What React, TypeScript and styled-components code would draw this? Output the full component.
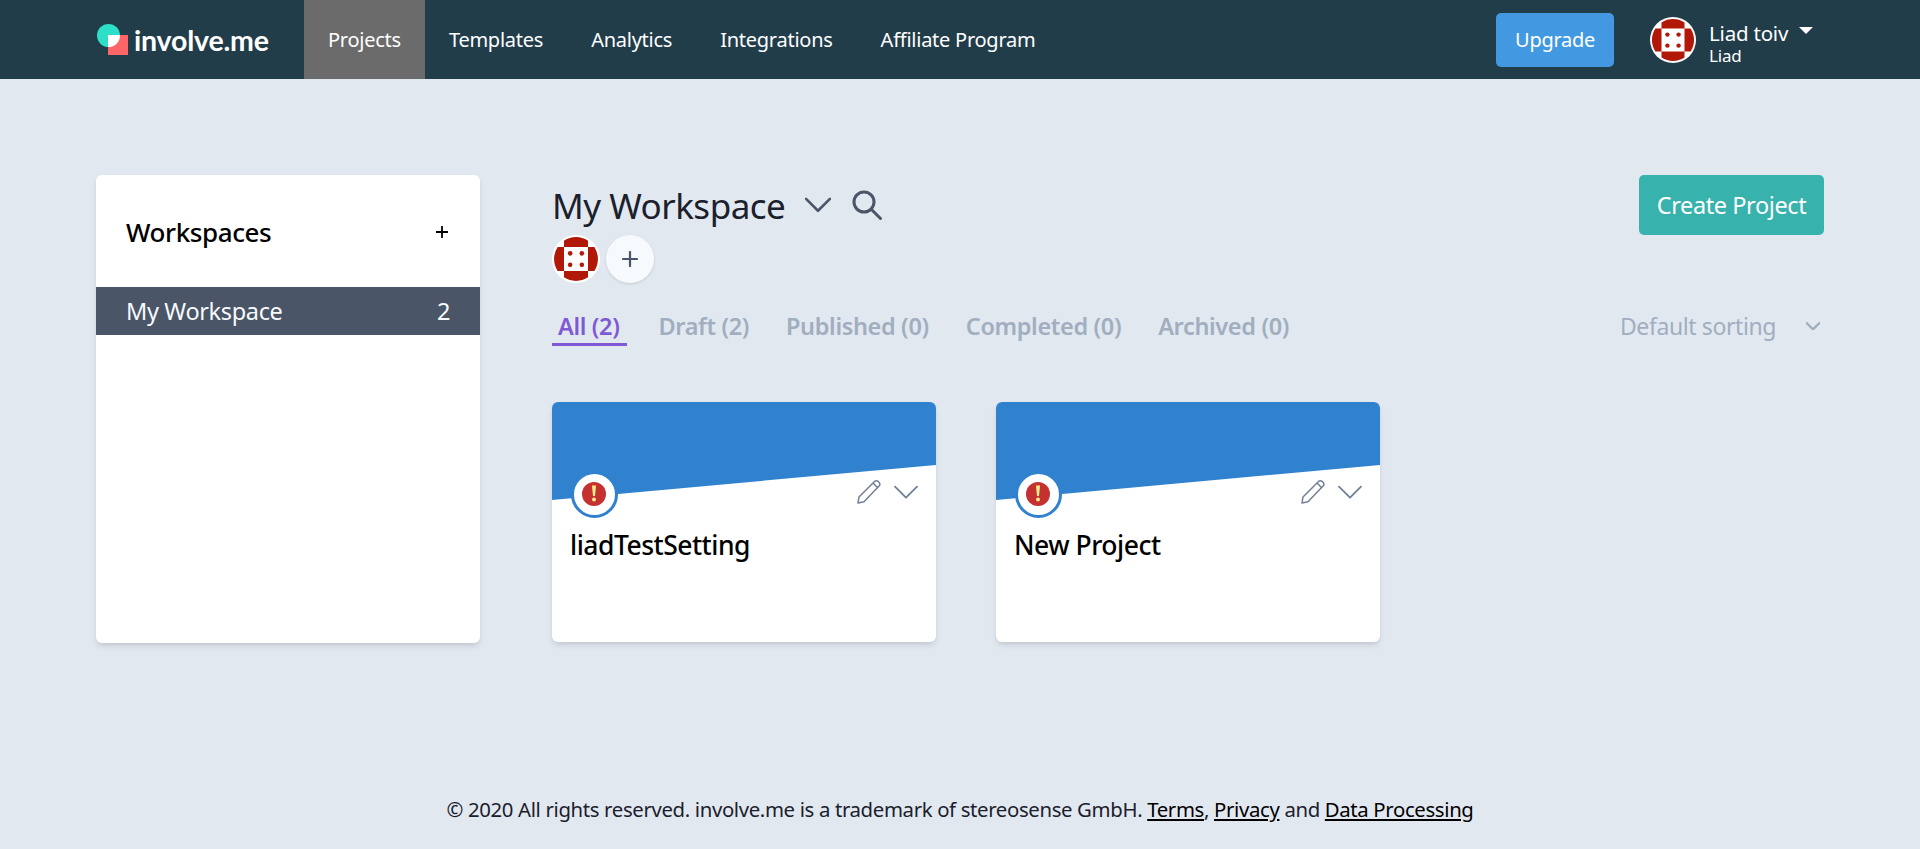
import React from 'react';
import styled, { createGlobalStyle } from 'styled-components';

const GlobalStyle = createGlobalStyle`
  html, body {
    margin: 0;
    padding: 0;
    background: #e2e8f0;
    font-family: 'Noto Sans', 'Open Sans', Arial, sans-serif;
  }
  * { box-sizing: border-box; }
`;

const Page = styled.div`
  display: flex;
  flex-direction: column;
  height: 849px;
  overflow: hidden;
`;

const Header = styled.header`
  display: flex;
  align-items: stretch;
  height: 79px;
  padding: 0 52px 0 96px;
  background: #223d4a;
  color: #fff;
`;

const LogoLink = styled.a`
  display: flex;
  align-items: center;
  width: 208px;
  gap: 5px;
`;

const LogoText = styled.span`
  font-family: Lato, sans-serif;
  font-weight: 700;
  font-size: 28.5px;
  letter-spacing: -0.2px;
  color: #fff;
`;

const NavItem = styled.a<{ $active?: boolean }>`
  display: flex;
  align-items: center;
  padding: 0 24px;
  font-size: 20px;
  letter-spacing: -0.25px;
  color: #fff;
  background: ${(p) => (p.$active ? '#6b6b6b' : 'transparent')};
`;

const HeaderRight = styled.div`
  display: flex;
  align-items: center;
  margin-left: auto;
`;

const UpgradeButton = styled.button`
  width: 118px;
  height: 54px;
  margin-right: 36px;
  border: 0;
  border-radius: 5px;
  background: #4299e1;
  color: #fff;
  font: inherit;
  font-size: 20px;
  letter-spacing: -0.3px;
`;

const UserBlock = styled.div`
  display: flex;
  flex-direction: column;
  margin: 7px 0 0 13px;
  width: 159px;
`;

const UserName = styled.div`
  display: flex;
  align-items: center;
  font-size: 20.5px;
  line-height: 26px;
  letter-spacing: -0.2px;
`;

const Caret = styled.span`
  width: 0;
  height: 0;
  margin: -6px 0 0 11px;
  border-left: 7px solid transparent;
  border-right: 7px solid transparent;
  border-top: 7px solid #fff;
`;

const UserSub = styled.div`
  font-size: 17px;
  line-height: 20px;
  letter-spacing: -0.2px;
`;

const Content = styled.main`
  flex: 1;
  display: flex;
  align-items: flex-start;
  gap: 72px;
  padding: 96px 96px 0;
`;

const Sidebar = styled.aside`
  flex: none;
  width: 384px;
  height: 468px;
  padding-top: 32px;
  background: #fff;
  border-radius: 6px;
  box-shadow: 0 4px 6px -1px rgba(0, 0, 0, 0.1), 0 2px 4px -1px rgba(0, 0, 0, 0.06);
`;

const SidebarHead = styled.div`
  display: flex;
  align-items: center;
  justify-content: space-between;
  height: 50px;
  padding: 0 31px 0 30px;
  margin-bottom: 30px;
`;

const SidebarTitle = styled.h2`
  margin: 0;
  font-size: 26px;
  font-weight: 500;
  letter-spacing: -0.4px;
  color: #000;
`;

const SidebarRow = styled.div`
  display: flex;
  align-items: center;
  justify-content: space-between;
  height: 48px;
  padding: 0 30px;
  background: #4a5568;
  color: #f7fafc;
  font-size: 23.5px;
  letter-spacing: -0.35px;
`;

const Main = styled.section`
  flex: 1;
  min-width: 0;
`;

const TopRow = styled.div`
  display: flex;
  justify-content: space-between;
  height: 60px;
`;

const TitleGroup = styled.div`
  display: flex;
  align-items: center;
  gap: 20px;
  height: 60px;
`;

const Title = styled.h1`
  margin: 0;
  font-size: 35px;
  font-weight: 400;
  letter-spacing: -0.5px;
  color: #1a202c;
`;

const CreateButton = styled.button`
  width: 185px;
  height: 60px;
  border: 0;
  border-radius: 5px;
  background: #38b2ac;
  color: #fff;
  font: inherit;
  font-size: 23.5px;
  letter-spacing: -0.4px;
`;

const Members = styled.div`
  display: flex;
  gap: 6px;
  height: 48px;
`;

const AddMember = styled.button`
  display: flex;
  align-items: center;
  justify-content: center;
  width: 48px;
  height: 48px;
  padding: 0;
  border: 0;
  border-radius: 50%;
  background: #f7fafc;
  box-shadow: 0 1px 3px rgba(0, 0, 0, 0.12);
`;

const TabsRow = styled.div`
  display: flex;
  align-items: flex-start;
  justify-content: space-between;
  margin-top: 25px;
`;

const Tabs = styled.nav`
  display: flex;
  gap: 25px;
`;

const Tab = styled.a<{ $active?: boolean }>`
  display: block;
  padding: 0 ${(p) => (p.$active ? '8px' : '6px')} 0 6px;
  height: 38px;
  line-height: 36px;
  font-size: 23.5px;
  font-weight: 600;
  letter-spacing: -0.35px;
  color: ${(p) => (p.$active ? '#805ad5' : '#a0aec0')};
  border-bottom: 3px solid ${(p) => (p.$active ? '#805ad5' : 'transparent')};
`;

const Sorting = styled.div`
  display: flex;
  align-items: center;
  height: 36px;
  gap: 30px;
  padding-right: 4px;
  font-size: 23px;
  letter-spacing: -0.4px;
  color: #a0aec0;
`;

const Cards = styled.div`
  display: flex;
  gap: 60px;
  margin-top: 56px;
`;

const Card = styled.article`
  position: relative;
  width: 384px;
  height: 240px;
  background: #fff;
  border-radius: 6px;
  overflow: hidden;
  box-shadow: 0 4px 6px -1px rgba(0, 0, 0, 0.1), 0 2px 4px -1px rgba(0, 0, 0, 0.06);
`;

const Banner = styled.div`
  height: 98px;
  background: #3182ce;
  clip-path: polygon(0 0, 100% 0, 100% 63px, 0 98px);
`;

const StatusBadge = styled.div`
  position: absolute;
  left: 19px;
  top: 69px;
  display: flex;
  align-items: center;
  justify-content: center;
  width: 47px;
  height: 47px;
  padding: 0 1px 2px 0;
  background: #fff;
  border: 3px solid #3182ce;
  border-radius: 50%;
`;

const CardActions = styled.div`
  position: absolute;
  top: 78px;
  right: 18px;
  display: flex;
  align-items: center;
  gap: 13px;
`;

const CardTitle = styled.h3`
  margin: 27px 0 0;
  padding: 0 18px;
  font-size: 26.5px;
  line-height: 36px;
  font-weight: 500;
  letter-spacing: -0.5px;
  color: #000;
`;

const Footer = styled.footer`
  padding-bottom: 25px;
  text-align: center;
  font-size: 20.35px;
  line-height: 30px;
  letter-spacing: -0.35px;
  color: #1a202c;
`;

const FooterLink = styled.a`
  color: #000;
  text-decoration: underline;
`;

const Logo = () => (
  <svg width="33" height="33" viewBox="0 0 33 33">
    <circle cx="12.5" cy="12.5" r="11.5" fill="#2ddfc8" />
    <rect x="12" y="12" width="20" height="20" fill="#fe6566" />
    <path d="M12 12H24A11.5 11.5 0 0 1 12 24Z" fill="#fff" />
  </svg>
);

const Avatar = ({ size = 46 }: { size?: number }) => (
  <svg width={size} height={size} viewBox="0 0 46 46">
    <circle cx="23" cy="23" r="23" fill="#fff" />
    <path
      d="M11.5 5.4A21 21 0 0 1 34.5 5.4V11.5H11.5ZM5.4 11.5A21 21 0 0 0 5.4 34.5H11.5V11.5ZM40.6 11.5A21 21 0 0 1 40.6 34.5H34.5V11.5ZM11.5 40.6A21 21 0 0 0 34.5 40.6V34.5H11.5Z"
      fill="#b21807"
    />
    <circle cx="17.4" cy="17.6" r="2.2" fill="#b21807" />
    <circle cx="28.6" cy="17.6" r="2.2" fill="#b21807" />
    <circle cx="17.4" cy="28.6" r="2.2" fill="#b21807" />
    <circle cx="28.6" cy="28.6" r="2.2" fill="#b21807" />
  </svg>
);

const Chevron = ({ width, color, stroke }: { width: number; color: string; stroke: number }) => (
  <svg width={width} height={width * 0.6} viewBox="0 0 24 14" fill="none">
    <path d="M1 1.5L12 12.5L23 1.5" stroke={color} strokeWidth={stroke} strokeLinecap="round" strokeLinejoin="round" />
  </svg>
);

const Search = () => (
  <svg width="32" height="32" viewBox="0 0 32 32" fill="none" stroke="#4a5568" strokeWidth="3" strokeLinecap="round">
    <circle cx="13" cy="13" r="10" />
    <path d="M20.5 20.5L29.5 29.5" />
  </svg>
);

const Plus = () => (
  <svg width="16" height="16" viewBox="0 0 16 16" stroke="#4a5568" strokeWidth="2.2" strokeLinecap="round">
    <path d="M8 1V15M1 8H15" />
  </svg>
);

const SmallPlus = () => (
  <svg width="14" height="14" viewBox="0 0 14 14" stroke="#000" strokeWidth="1.8">
    <path d="M7 1V13M1 7H13" />
  </svg>
);

const Pencil = () => (
  <svg width="24" height="24" viewBox="0 0 24 24" fill="none" stroke="#718096" strokeWidth="1.5" strokeLinejoin="round">
    <path d="M1 23L2 17L17.5 1.5C18.5 .6 20 .6 21.5 1.7C23 3 23.2 4.6 22.3 5.8L7 21.8Z" />
    <path d="M16 3L21 8" />
  </svg>
);

const AlertIcon = () => (
  <svg width="24" height="24" viewBox="0 0 24 24">
    <circle cx="12" cy="12" r="12" fill="#c53030" />
    <path d="M10 3.5H14L13 14H11Z" fill="#faf089" />
    <circle cx="12" cy="17.5" r="1.9" fill="#faf089" />
  </svg>
);

const projects = ['liadTestSetting', 'New Project'];

const tabs = ['All (2)', 'Draft (2)', 'Published (0)', 'Completed (0)', 'Archived (0)'];

const navItems = ['Projects', 'Templates', 'Analytics', 'Integrations', 'Affiliate Program'];

export default function App() {
  return (
    <Page>
      <GlobalStyle />
      <Header>
        <LogoLink>
          <Logo />
          <LogoText>involve.me</LogoText>
        </LogoLink>
        {navItems.map((item, i) => (
          <NavItem key={item} $active={i === 0}>
            {item}
          </NavItem>
        ))}
        <HeaderRight>
          <UpgradeButton>Upgrade</UpgradeButton>
          <Avatar />
          <UserBlock>
            <UserName>
              Liad toiv
              <Caret />
            </UserName>
            <UserSub>Liad</UserSub>
          </UserBlock>
        </HeaderRight>
      </Header>
      <Content>
        <Sidebar>
          <SidebarHead>
            <SidebarTitle>Workspaces</SidebarTitle>
            <SmallPlus />
          </SidebarHead>
          <SidebarRow>
            <span>My Workspace</span>
            <span>2</span>
          </SidebarRow>
        </Sidebar>
        <Main>
          <TopRow>
            <TitleGroup>
              <Title>My Workspace</Title>
              <Chevron width={26} color="#4a5568" stroke={2.4} />
              <Search />
            </TitleGroup>
            <CreateButton>Create Project</CreateButton>
          </TopRow>
          <Members>
            <Avatar size={48} />
            <AddMember>
              <Plus />
            </AddMember>
          </Members>
          <TabsRow>
            <Tabs>
              {tabs.map((t, i) => (
                <Tab key={t} $active={i === 0}>
                  {t}
                </Tab>
              ))}
            </Tabs>
            <Sorting>
              Default sorting
              <Chevron width={14} color="#a0aec0" stroke={4} />
            </Sorting>
          </TabsRow>
          <Cards>
            {projects.map((p) => (
              <Card key={p}>
                <Banner />
                <StatusBadge>
                  <AlertIcon />
                </StatusBadge>
                <CardActions>
                  <Pencil />
                  <Chevron width={24} color="#718096" stroke={1.8} />
                </CardActions>
                <CardTitle>{p}</CardTitle>
              </Card>
            ))}
          </Cards>
        </Main>
      </Content>
      <Footer>
        © 2020 All rights reserved. involve.me is a trademark of stereosense GmbH.{' '}
        <FooterLink>Terms</FooterLink>, <FooterLink>Privacy</FooterLink> and{' '}
        <FooterLink>Data Processing</FooterLink>
      </Footer>
    </Page>
  );
}
